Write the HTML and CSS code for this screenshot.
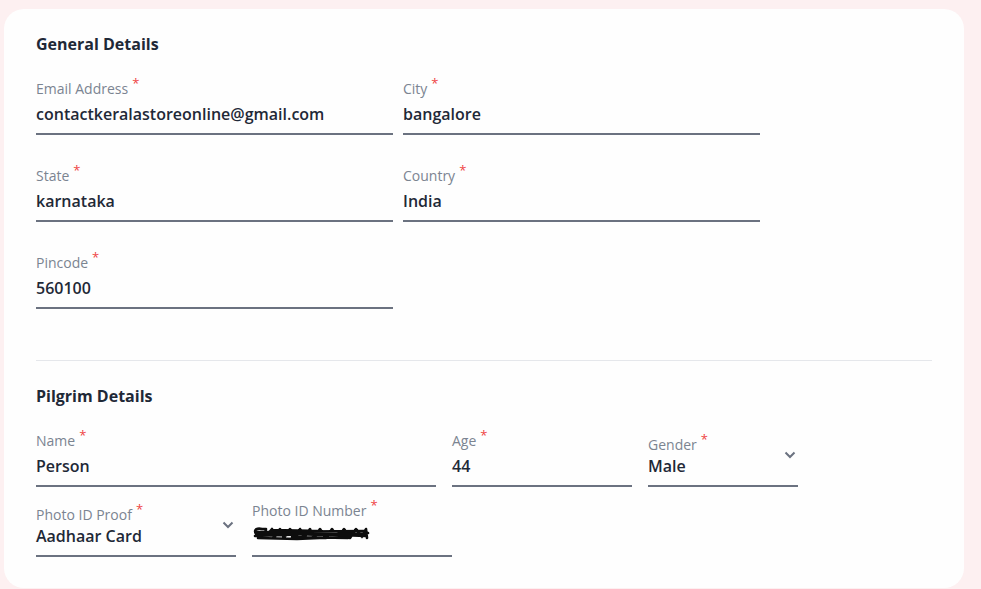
FILE: index.html
```html
<!DOCTYPE html>
<html lang="en">
<head>
<meta charset="utf-8">
<title>Details</title>
<link rel="stylesheet" href="styles.css">
</head>
<body>
<div class="card">
  <h2 class="section-title">General Details</h2>
  <div class="grid-two">
    <div class="field">
      <div class="label">Email Address<span class="req">*</span></div>
      <div class="value">contactkeralastoreonline@gmail.com</div>
    </div>
    <div class="field">
      <div class="label">City<span class="req">*</span></div>
      <div class="value">bangalore</div>
    </div>
    <div class="field">
      <div class="label">State<span class="req">*</span></div>
      <div class="value">karnataka</div>
    </div>
    <div class="field">
      <div class="label">Country<span class="req">*</span></div>
      <div class="value">India</div>
    </div>
    <div class="field">
      <div class="label">Pincode<span class="req">*</span></div>
      <div class="value">560100</div>
    </div>
  </div>

  <hr class="divider">

  <h2 class="section-title">Pilgrim Details</h2>
  <div class="row">
    <div class="field w400">
      <div class="label">Name<span class="req">*</span></div>
      <div class="value">Person</div>
    </div>
    <div class="field w180">
      <div class="label">Age<span class="req">*</span></div>
      <div class="value">44</div>
    </div>
    <div class="field select w150">
      <div class="label">Gender<span class="req">*</span></div>
      <div class="value">Male</div>
      <svg class="chev" width="12" height="8" viewBox="0 0 12 8"><path d="M1.5 1.5 L6 6 L10.5 1.5" fill="none" stroke="#6b7280" stroke-width="2"/></svg>
    </div>
  </div>
  <div class="row row-second">
    <div class="field select w200">
      <div class="label">Photo ID Proof<span class="req">*</span></div>
      <div class="value">Aadhaar Card</div>
      <svg class="chev" width="12" height="8" viewBox="0 0 12 8"><path d="M1.5 1.5 L6 6 L10.5 1.5" fill="none" stroke="#6b7280" stroke-width="2"/></svg>
    </div>
    <div class="field w200">
      <div class="label">Photo ID Number<span class="req">*</span></div>
      <div class="value"><svg class="scribble" width="118" height="18" viewBox="0 0 118 18"><path d="M4 9 C1 4 6 3 10 4 L14 4 L12 13 L20 4 L22 13 L28 4 L32 13 L38 4 L44 13 L48 4 L52 13 L58 4 L62 13 L68 4 L74 13 L80 4 L86 13 L92 4 L98 13 L104 4 L110 12 L114 4 L115 13 M4 7 L112 6 M3 11 L60 9 L114 11 M6 9 C30 5 60 14 100 7 M6 13 L45 14 L90 12 L116 8 M20 5 L70 6 M40 12 L96 13 M10 8 L108 9" fill="none" stroke="#0d0d0d" stroke-width="2.6" stroke-linecap="round" stroke-linejoin="round"/></svg></div>
    </div>
  </div>
</div>
</body>
</html>
```

FILE: styles.css
```css
* { box-sizing: border-box; }

html, body {
  margin: 0;
  padding: 0;
}

body {
  background: #fdf0f1;
  font-family: "Open Sans", "Noto Sans", sans-serif;
  color: #1f2937;
  width: 981px;
  height: 589px;
  overflow: hidden;
}

.card {
  margin: 9px 0 0 4px;
  width: 960px;
  height: 579px;
  background: #fefefe;
  border-radius: 20px;
  padding: 25px 32px 0 32px;
}

.section-title {
  margin: 0;
  font-size: 16px;
  line-height: 20px;
  font-weight: 700;
  color: #1f2937;
}

.grid-two {
  margin-top: 25px;
  display: grid;
  grid-template-columns: 357px 357px;
  column-gap: 10px;
  row-gap: 31px;
}

.field {
  position: relative;
  border-bottom: 2px solid #6b7280;
  padding-bottom: 8px;
}

.label {
  font-size: 14px;
  line-height: 20px;
  color: #7b8491;
  white-space: nowrap;
}

.req {
  color: #ef4444;
  font-size: 13px;
  position: relative;
  top: -6px;
  margin-left: 4px;
}

.value {
  margin-top: 4px;
  font-size: 16px;
  line-height: 22px;
  font-weight: 600;
  color: #1f2937;
  white-space: nowrap;
  height: 22px;
}

.select .label {
  margin-top: 4px;
}

.select .value {
  margin-top: 0;
}

.chev {
  position: absolute;
  right: 2px;
  top: 20px;
}

.divider {
  margin: 51px 0 25px 0;
  border: 0;
  border-top: 1px solid #e5e7eb;
  width: 896px;
}

.row {
  display: flex;
  gap: 16px;
  margin-top: 25px;
}

.row-second {
  margin-top: 14px;
}

.w400 { width: 400px; }
.w180 { width: 180px; }
.w150 { width: 150px; }
.w200 { width: 200px; }

.scribble {
  display: block;
  margin-top: 3px;
}
```
